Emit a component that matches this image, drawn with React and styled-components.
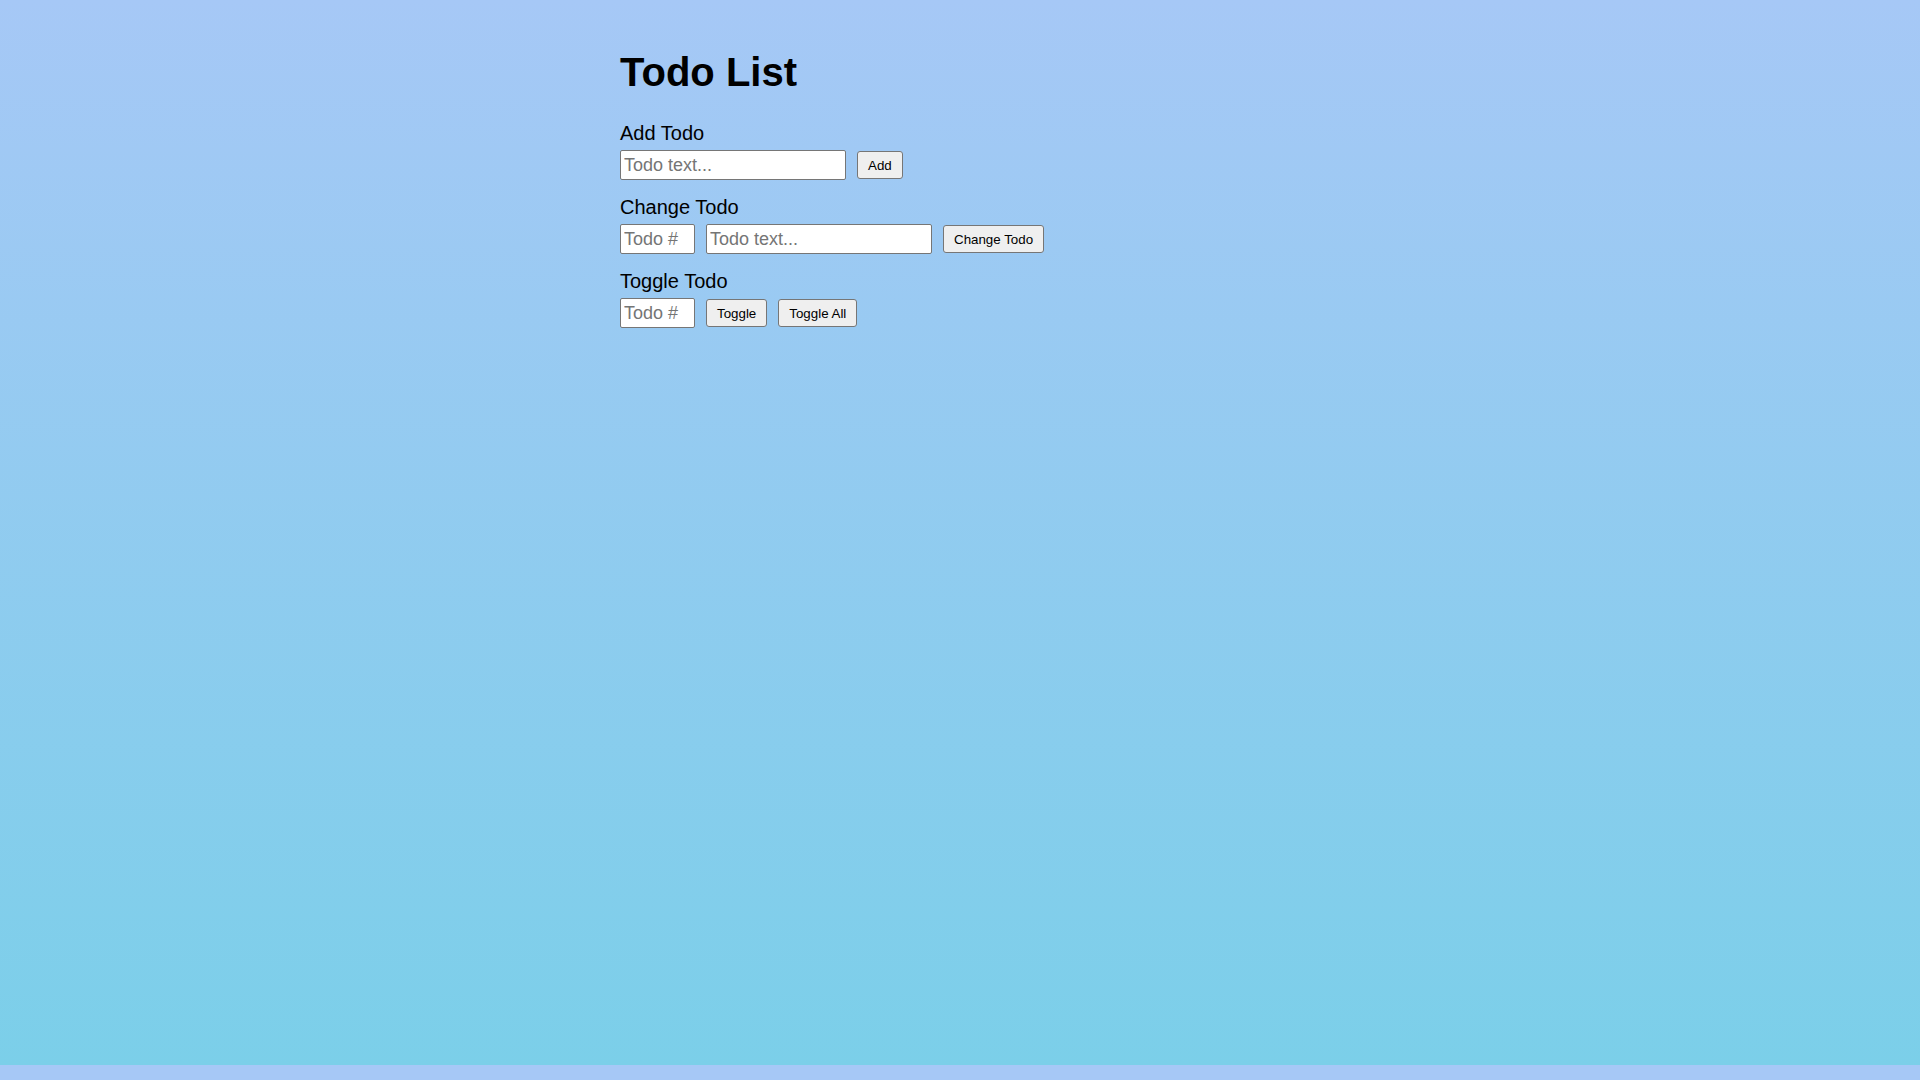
import React, { useState } from "react";
import styled, { createGlobalStyle } from "styled-components";

const GlobalStyle = createGlobalStyle`
  html, body {
    margin: 0;
    padding: 0;
    background: #a6c8f6;
  }
  body {
    font-family: "Liberation Sans", Arial, sans-serif;
    color: #000;
  }
`;

const Page = styled.div`
  min-height: 1065px;
  box-sizing: border-box;
  padding-top: 49px;
  background: linear-gradient(to bottom, #a6c8f6, #7bcfe9);
`;

const Wrapper = styled.div`
  width: 680px;
  margin: 0 auto;
`;

const Title = styled.h1`
  font-size: 40px;
  font-weight: bold;
  line-height: 46px;
  margin: 0 0 27px;
`;

const Section = styled.div`
  margin-bottom: 16px;
`;

const Label = styled.div`
  font-size: 20px;
  line-height: 23px;
  margin-bottom: 5px;
`;

const Row = styled.div`
  display: flex;
  align-items: center;
  gap: 11px;
`;

const Input = styled.input`
  box-sizing: border-box;
  width: ${(p) => (p.$small ? "75px" : "226px")};
  height: 30px;
  padding: 0 3px;
  font-family: "Liberation Sans", Arial, sans-serif;
  font-size: 18px;
  color: #000;
  background: #fff;
  border: 1px solid #767676;
  border-radius: 2px;
  outline: none;

  &::placeholder {
    color: #757575;
  }
`;

const Button = styled.button`
  box-sizing: border-box;
  height: 28px;
  padding: 0 10px;
  font-family: "Liberation Sans", Arial, sans-serif;
  font-size: 13.33px;
  color: #000;
  background: #efefef;
  border: 1px solid #767676;
  border-radius: 3px;
  cursor: pointer;
`;

const App = () => {
  const [text, setText] = useState("");
  const [changeNum, setChangeNum] = useState("");
  const [changeText, setChangeText] = useState("");
  const [toggleNum, setToggleNum] = useState("");

  return (
    <Page>
      <GlobalStyle />
      <Wrapper>
        <Title>Todo List</Title>

        <Section>
          <Label>Add Todo</Label>
          <Row>
            <Input
              placeholder="Todo text..."
              value={text}
              onChange={(e) => setText(e.target.value)}
            />
            <Button>Add</Button>
          </Row>
        </Section>

        <Section>
          <Label>Change Todo</Label>
          <Row>
            <Input
              $small
              placeholder="Todo #"
              value={changeNum}
              onChange={(e) => setChangeNum(e.target.value)}
            />
            <Input
              placeholder="Todo text..."
              value={changeText}
              onChange={(e) => setChangeText(e.target.value)}
            />
            <Button>Change Todo</Button>
          </Row>
        </Section>

        <Section>
          <Label>Toggle Todo</Label>
          <Row>
            <Input
              $small
              placeholder="Todo #"
              value={toggleNum}
              onChange={(e) => setToggleNum(e.target.value)}
            />
            <Button>Toggle</Button>
            <Button>Toggle All</Button>
          </Row>
        </Section>
      </Wrapper>
    </Page>
  );
};

export default App;
